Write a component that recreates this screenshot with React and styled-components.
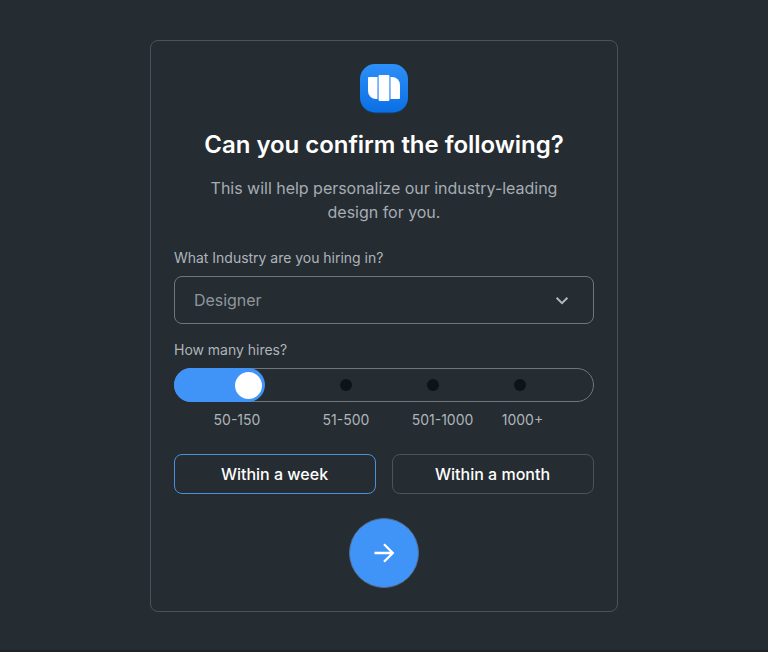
import React from "react";
import styled, { createGlobalStyle } from "styled-components";

const GlobalStyle = createGlobalStyle`
  * { box-sizing: border-box; }
  body { margin: 0; background: #252c32; font-family: Inter, sans-serif; color: #fff; }
  button { font-family: inherit; cursor: pointer; }
`;
const Page = styled.main`
  height: 652px;
  padding-top: 40px;
  display: flex;
  justify-content: center;
  align-items: flex-start;
  border-bottom: 2px solid #1e2329;
`;
const Card = styled.section`
  width: 468px;
  height: 572px;
  padding: 23px;
  border: 1px solid #4b545a;
  border-radius: 8px;
  display: flex;
  flex-direction: column;
  align-items: center;
`;
const Logo = styled.svg`
  display: block;
  flex: none;
  width: 50px;
  height: 50px;
`;
const Title = styled.h1`
  margin: 15px 0 0;
  font-size: 24px;
  line-height: 32px;
  font-weight: 600;
  letter-spacing: -0.04px;
  white-space: nowrap;
`;
const Intro = styled.p`
  margin: 15px 0 0;
  width: 380px;
  text-align: center;
  font-size: 16px;
  line-height: 24px;
  letter-spacing: -0.02px;
  color: #a6adb3;
`;
const Label = styled.div`
  align-self: stretch;
  font-size: 14px;
  line-height: 20px;
  letter-spacing: -0.02px;
  color: #aeb5ba;
  margin-top: ${(p) => p.$gap}px;
`;
const Select = styled.button`
  width: 420px;
  height: 48px;
  margin-top: 8px;
  padding: 0 24px 0 19px;
  display: flex;
  align-items: center;
  justify-content: space-between;
  background: transparent;
  border: 1px solid #6f777d;
  border-radius: 8px;
  color: #8f979d;
  font-size: 16px;
  letter-spacing: -0.05px;
`;
const Chevron = styled.svg`
  width: 14px;
  height: 10px;
  margin-top: 1px;
`;
const Track = styled.div`
  width: 420px;
  height: 34px;
  margin-top: 8px;
  border: 1px solid #6f777d;
  border-radius: 17px;
  display: grid;
  grid-template-columns: 90px 162px 87px 1fr;
  grid-template-rows: 32px;
  align-items: center;
`;
const Fill = styled.div`
  width: 91px;
  height: 34px;
  margin: -1px 0 -1px -1px;
  border-radius: 17px;
  background: #4094f7;
  display: flex;
  align-items: center;
  justify-content: flex-end;
  padding-right: 3px;
`;
const Thumb = styled.span`
  width: 27px;
  height: 27px;
  border-radius: 50%;
  background: #fff;
`;
const Dot = styled.span`
  width: 12px;
  height: 12px;
  border-radius: 50%;
  background: #0c1319;
  justify-self: ${(p) => p.$first ? "center" : "start"};
`;
const Scale = styled.div`
  width: 420px;
  margin-top: 8px;
  display: grid;
  grid-template-columns: 126px 92px 101px 59px;
  font-size: 14px;
  line-height: 20px;
  color: #aeb5ba;
  text-align: center;
`;
const Choices = styled.div`
  margin-top: 24px;
  display: flex;
  gap: 16px;
`;
const Choice = styled.button`
  width: 202px;
  height: 40px;
  padding: 0 1px 0 0;
  border: 1px solid ${(p) => p.$active ? "#4b90de" : "#4b545a"};
  border-radius: 8px;
  background: transparent;
  color: #fff;
  font-size: 16px;
  font-weight: 500;
`;
const Next = styled.button`
  width: 70px;
  height: 70px;
  margin-top: 24px;
  padding: 0;
  border: 1px solid #526f91;
  border-radius: 50%;
  background: #4094f7;
  display: grid;
  place-items: center;
`;

export default function App() {
  return (
    <>
      <GlobalStyle />
      <Page>
        <Card>
          <Logo viewBox="0 0 50 50">
            <defs>
              <linearGradient id="logo-fill" x2="0" y2="1">
                <stop stopColor="#2d8ff8" />
                <stop offset="1" stopColor="#0b6fe5" />
              </linearGradient>
            </defs>
            <rect x="1" y="1" width="48" height="48.5" rx="15" fill="#0b488b" opacity=".65" />
            <rect x="1" y="0" width="48" height="48.5" rx="15" fill="url(#logo-fill)" />
            <path d="M10 13h8.5v22H17a8 8 0 0 1-8-8V14a1 1 0 0 1 1-1z" fill="#fff" />
            <rect x="19.6" y="11" width="10.8" height="26" rx="1" fill="#fff" />
            <path d="M31.5 13H33a8 8 0 0 1 8 8v13a1 1 0 0 1-1 1h-8.5z" fill="#fff" />
          </Logo>
          <Title>Can you confirm the following?</Title>
          <Intro>This will help personalize our industry-leading design for you.</Intro>
          <Label $gap={24}>What Industry are you hiring in?</Label>
          <Select>
            <span>Designer</span>
            <Chevron viewBox="0 0 14 10" fill="none"><path d="M1.6 1.8 7 7.2l5.4-5.4" stroke="#b0b8bd" strokeWidth="2" /></Chevron>
          </Select>
          <Label $gap={16}>How many hires?</Label>
          <Track><Fill><Thumb /></Fill><Dot $first /><Dot /><Dot /></Track>
          <Scale><span>50-150</span><span>51-500</span><span>501-1000</span><span>1000+</span></Scale>
          <Choices><Choice $active>Within a week</Choice><Choice>Within a month</Choice></Choices>
          <Next aria-label="Continue">
            <svg width="22" height="22" viewBox="0 0 22 22" fill="none"><path d="M1.5 11h18M11 2.2l8.8 8.8-8.8 8.8" stroke="#fff" strokeWidth="2.3" /></svg>
          </Next>
        </Card>
      </Page>
    </>
  );
}
